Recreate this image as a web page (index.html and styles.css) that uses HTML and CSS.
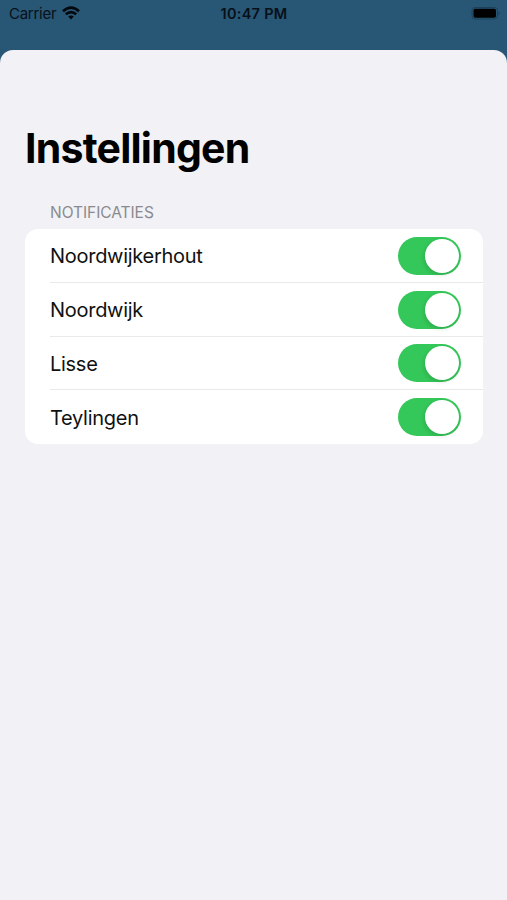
FILE: index.html
```html
<!DOCTYPE html>
<html lang="nl">
<head>
<meta charset="utf-8">
<title>Instellingen</title>
<link rel="stylesheet" href="styles.css">
</head>
<body>
<header class="status">
  <div class="carrier"><span class="carrier-name">Carrier</span>
    <svg class="wifi" viewBox="0 0 18 14" width="18" height="14"><g fill="none" stroke="#03080d" stroke-width="2.6"><path d="M1 5.2Q9-2 17 5.2"/><path d="M3.8 8.3Q9 3.8 14.2 8.3"/></g><path fill="#03080d" d="M6.2 10.6Q9 8.2 11.8 10.6L9 13.6Z"/></svg>
  </div>
  <div class="time">10:47 PM</div>
  <div class="power"><svg width="30" height="14" viewBox="0 0 30 14"><rect x="1" y="0.5" width="25.5" height="11.5" rx="3" fill="none" stroke="#1d4059"/><rect x="2.5" y="1.7" width="22.5" height="9" rx="1.8"/><path d="M27.6 4.3q2 2 0 4z" fill="#1b3b54"/></svg></div>
</header>
<main class="sheet">
  <h1 class="title">Instellingen</h1>
  <h2 class="section">NOTIFICATIES</h2>
  <ul class="list">
    <li class="row"><span class="name">Noordwijkerhout</span><span class="switch"></span></li>
    <li class="row"><span class="name">Noordwijk</span><span class="switch"></span></li>
    <li class="row"><span class="name">Lisse</span><span class="switch"></span></li>
    <li class="row"><span class="name">Teylingen</span><span class="switch"></span></li>
  </ul>
</main>
</body>
</html>
```
FILE: styles.css
```css
* { box-sizing: border-box; }
body { margin: 0; height: 900px; overflow: hidden; background: #285675; font-family: Inter, sans-serif; color: #000; display: flex; flex-direction: column; }
.status { height: 50px; flex: none; display: grid; grid-template-columns: 1fr auto 1fr; align-items: start; padding: 5px 6px 0 9px; font-size: 15px; line-height: 18px; color: #071019; }
.carrier { display: flex; gap: 6px; }
.carrier-name { letter-spacing: -0.27px; }
.wifi { margin-top: 1px; margin-left: -0.5px; }
.time { font-weight: 600; font-size: 14.5px; letter-spacing: 0.28px; margin-left: -2px; }
.power { display: flex; justify-content: flex-end; padding-top: 2px; }
.sheet { flex: 1; background: #f1f1f6; border-radius: 13px 13px 0 0; padding: 72px 24px 0 25px; }
.title { margin: 0; font-size: 41px; line-height: 52px; font-weight: 700; letter-spacing: -0.77px; }
.section { margin: 28px 0 5px 25px; font-size: 15.5px; line-height: 22px; font-weight: 400; letter-spacing: -0.05px; color: #8a8a8e; }
.list { margin: 0; padding: 0; list-style: none; background: #fff; border-radius: 13px; height: 215px; display: grid; grid-template-rows: repeat(4, 1fr); }
.row { margin-left: 25px; padding-right: 22px; display: flex; align-items: center; justify-content: space-between; font-size: 20px; letter-spacing: -0.28px; color: #111; }
.row + .row { box-shadow: 0 -1px #e9e9eb; }
.name { padding-top: 1px; }
.switch { width: 63px; height: 38px; border-radius: 19px; background: #34c759; padding: 2px; display: flex; justify-content: flex-end; }
.switch::before { content: ""; width: 34px; height: 34px; border-radius: 50%; background: #fff; box-shadow: -1px 2px 4px #0002; }
```
